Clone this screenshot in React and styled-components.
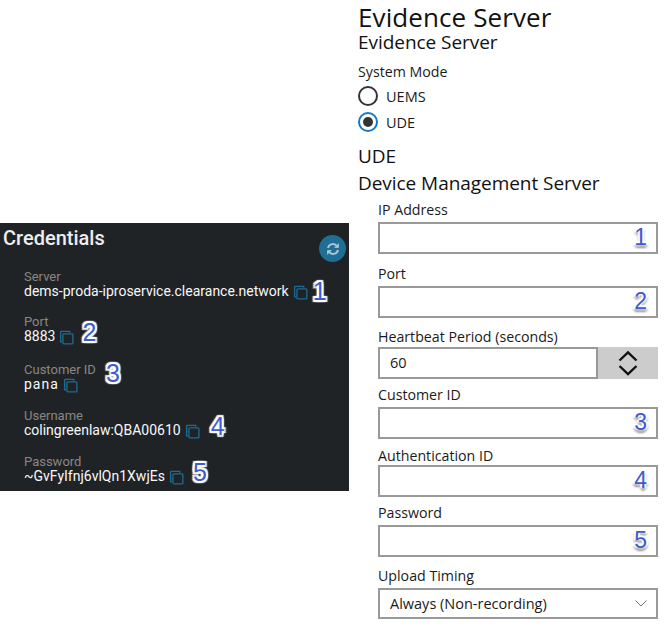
import { createGlobalStyle, styled } from 'styled-components';

const GlobalStyle = createGlobalStyle`
  html, body {
    margin: 0;
    padding: 0;
    background: #fff;
  }
  * {
    box-sizing: border-box;
  }
`;

const credentials = [
  { label: 'Server', value: 'dems-proda-iproservice.clearance.network', mark: '1', top: 4, gap: 5, lift: 0 },
  { label: 'Port', value: '8883', mark: '2', top: 15, gap: 8, lift: -4 },
  { label: 'Customer ID', value: 'pana', mark: '3', top: 18, gap: 10, lift: 4, spaced: true, raised: true },
  { label: 'Username', value: 'colingreenlaw:QBA00610', mark: '4', top: 16, gap: 11, lift: -4 },
  { label: 'Password', value: '~GvFyIfnj6vlQn1XwjEs', mark: '5', top: 16, gap: 9, lift: -4 },
];

const CopyIcon = () => (
  <CopySvg viewBox="0 0 16 16" fill="none" stroke="#1c6c93" strokeWidth="1.4">
    <path d="M3 12.5H1.700V2.400A1 1 0 0 1 2.700 1.400H11.500V2.800" />
    <rect x="4.200" y="4.200" width="10.600" height="10.600" rx="1" />
  </CopySvg>
);

const App = () => (
  <>
    <GlobalStyle />
    <Page>
      <LeftColumn>
        <Panel>
          <PanelHead>
            <PanelTitle>Credentials</PanelTitle>
            <RefreshButton>
              <svg width="14" height="14" viewBox="0 0 14 14" fill="none" stroke="#a9c4d2" strokeWidth="2">
                <path d="M2 6A5 5 0 0 1 11 4.200" />
                <path d="M12 8A5 5 0 0 1 3 9.800" />
                <path d="M12.400 1.600V5.400H8.600" fill="#a9c4d2" strokeWidth="1" />
                <path d="M1.600 12.400V8.600H5.400" fill="#a9c4d2" strokeWidth="1" />
              </svg>
            </RefreshButton>
          </PanelHead>
          {credentials.map((item) => {
            const mark = (
              <PanelMark $gap={item.gap} $lift={item.lift}>
                {item.mark}
              </PanelMark>
            );
            return (
              <Credential key={item.label} $top={item.top}>
                <CredentialLabel>
                  {item.label}
                  {item.raised && mark}
                </CredentialLabel>
                <CredentialValue $spaced={item.spaced}>
                  {item.value}
                  <CopyIcon />
                  {!item.raised && mark}
                </CredentialValue>
              </Credential>
            );
          })}
        </Panel>
      </LeftColumn>
      <RightColumn>
        <PageTitle>Evidence Server</PageTitle>
        <SectionTitle>Evidence Server</SectionTitle>
        <FieldLabel $top={11}>System Mode</FieldLabel>
        <RadioRow $top={5}>
          <RadioCircle />
          UEMS
        </RadioRow>
        <RadioRow $top={6}>
          <RadioCircle $checked />
          UDE
        </RadioRow>
        <SectionTitle $top={14}>UDE</SectionTitle>
        <SectionTitle $top={7}>Device Management Server</SectionTitle>
        <Fields>
          <FieldLabel $top={8}>IP Address</FieldLabel>
          <TextBox $top={3}>
            <BoxMark>1</BoxMark>
          </TextBox>
          <FieldLabel $top={11}>Port</FieldLabel>
          <TextBox $top={3}>
            <BoxMark>2</BoxMark>
          </TextBox>
          <FieldLabel $top={10}>Heartbeat Period (seconds)</FieldLabel>
          <SpinRow>
            <SpinInput>60</SpinInput>
            <SpinButton>
              <svg width="22" height="32" viewBox="0 0 22 32" fill="none" stroke="#111" strokeWidth="2.4">
                <path d="M2.500 13.500L11 5.500L19.500 13.500" />
                <path d="M2.500 19L11 27L19.500 19" />
              </svg>
            </SpinButton>
          </SpinRow>
          <FieldLabel $top={7}>Customer ID</FieldLabel>
          <TextBox $top={3}>
            <BoxMark>3</BoxMark>
          </TextBox>
          <FieldLabel $top={8}>Authentication ID</FieldLabel>
          <TextBox $top={0}>
            <BoxMark>4</BoxMark>
          </TextBox>
          <FieldLabel $top={7}>Password</FieldLabel>
          <TextBox $top={3}>
            <BoxMark>5</BoxMark>
          </TextBox>
          <FieldLabel $top={10}>Upload Timing</FieldLabel>
          <SelectBox>
            Always (Non-recording)
            <svg width="12" height="7" viewBox="0 0 12 7" fill="none" stroke="#777" strokeWidth="1">
              <path d="M0.500 0.500L6 6L11.500 0.500" />
            </svg>
          </SelectBox>
        </Fields>
      </RightColumn>
    </Page>
  </>
);

const Page = styled.div`
  display: flex;
  width: 667px;
  height: 630px;
  overflow: hidden;
  background: #fff;
`;

const LeftColumn = styled.div`
  width: 358px;
  padding-top: 223px;
`;

const Panel = styled.section`
  width: 349px;
  height: 268px;
  background: #202326;
  font-family: Roboto, sans-serif;
`;

const PanelHead = styled.div`
  display: flex;
  justify-content: space-between;
  height: 43px;
  padding: 3px 3px 0;
`;

const PanelTitle = styled.h2`
  margin: 0;
  font-size: 20px;
  line-height: 24px;
  font-weight: 500;
  color: #eceef0;
`;

const RefreshButton = styled.div`
  display: flex;
  align-items: center;
  justify-content: center;
  width: 27px;
  height: 27px;
  margin-top: 9px;
  border-radius: 50%;
  background: #1f6f94;
`;

const Credential = styled.div`
  margin-top: ${(props) => props.$top}px;
  padding-left: 24px;
`;

const CredentialLabel = styled.div`
  display: flex;
  align-items: center;
  height: 13px;
  font-size: 13px;
  line-height: 13px;
  color: #8b8682;
`;

const CredentialValue = styled.div`
  display: flex;
  align-items: center;
  height: 17px;
  font-size: 14px;
  line-height: 17px;
  font-weight: 400;
  letter-spacing: ${(props) => (props.$spaced ? '1px' : '0')};
  color: #f7f8f9;
`;

const CopySvg = styled.svg`
  width: 15px;
  height: 15px;
  margin: 2px 0 0 4px;
  flex: none;
`;

const PanelMark = styled.span`
  margin-left: ${(props) => props.$gap}px;
  transform: translateY(${(props) => props.$lift}px);
  font-family: 'Liberation Sans', sans-serif;
  font-size: 25px;
  letter-spacing: 0;
  line-height: 17px;
  color: #3f5bd0;
  text-shadow: 2px 0 1px #fff, -2px 0 1px #fff, 0 2px 1px #fff, 0 -2px 1px #fff, 2px 2px 1px #fff, -2px -2px 1px #fff, 2px -2px 1px #fff, -2px 2px 1px #fff;
`;

const RightColumn = styled.main`
  flex: 1;
  font-family: 'Open Sans', sans-serif;
  color: #1a1a1a;
`;

const PageTitle = styled.h1`
  margin: 0;
  padding-top: 2px;
  font-size: 26px;
  line-height: 30px;
  font-weight: 400;
  letter-spacing: 0.1px;
  color: #111;
`;

const SectionTitle = styled.h2`
  margin: ${(props) => props.$top || 0}px 0 0;
  font-size: 19px;
  line-height: 20px;
  font-weight: 400;
  letter-spacing: -0.05px;
  color: #111;
`;

const FieldLabel = styled.div`
  margin-top: ${(props) => props.$top}px;
  font-size: 14.2px;
  line-height: 18px;
`;

const RadioRow = styled.div`
  display: flex;
  align-items: center;
  gap: 8px;
  height: 20px;
  margin-top: ${(props) => props.$top}px;
  font-size: 14.5px;
`;

const RadioCircle = styled.span`
  display: flex;
  align-items: center;
  justify-content: center;
  width: 20px;
  height: 20px;
  border-radius: 50%;
  border: 2px solid ${(props) => (props.$checked ? '#1478c8' : '#333')};
  &::after {
    content: '';
    display: ${(props) => (props.$checked ? 'block' : 'none')};
    width: 10px;
    height: 10px;
    border-radius: 50%;
    background: #333;
  }
`;

const Fields = styled.div`
  width: 300px;
  padding-left: 20px;
`;

const TextBox = styled.div`
  position: relative;
  height: 32px;
  margin-top: ${(props) => props.$top}px;
  border: 2px solid #999;
  background: #fff;
`;

const BoxMark = styled.span`
  position: absolute;
  top: -1px;
  right: 9px;
  font-family: 'Liberation Sans', sans-serif;
  font-size: 23px;
  line-height: 28px;
  color: #3f5bd0;
  text-shadow: 2px 0 1px #fff, -2px 0 1px #fff, 0 -2px 1px #fff, 2px 2px 2px #bbb, -2px 2px 2px #bbb, 0 3px 2px #888;
`;

const SpinRow = styled.div`
  display: flex;
  height: 32px;
  margin-top: 1px;
`;

const SpinInput = styled.div`
  width: 220px;
  padding-left: 10px;
  border: 2px solid #999;
  font-size: 14.5px;
  line-height: 28px;
`;

const SpinButton = styled.div`
  display: flex;
  align-items: center;
  justify-content: center;
  width: 60px;
  background: #ccc;
`;

const SelectBox = styled.div`
  display: flex;
  align-items: center;
  justify-content: space-between;
  height: 31px;
  margin-top: 3px;
  padding: 0 9px 0 10px;
  border: 2px solid #999;
  font-size: 14.5px;
`;

export default App;
